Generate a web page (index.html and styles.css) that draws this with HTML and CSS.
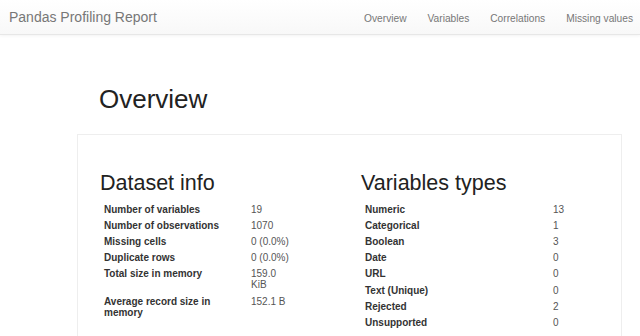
FILE: index.html
```html
<!doctype html>
<html lang="en">
<head>
	<meta charset="UTF-8">
	<title>Pandas Profiling Report</title>
	<link rel="stylesheet" href="styles.css">
</head>
<body>
	<div class="navbar">
		<a class="brand" href="#">Pandas Profiling Report</a>
		<ul class="nav">
			<li><a href="#overview">Overview</a></li>
			<li><a href="#variables">Variables</a></li>
			<li><a href="#correlations">Correlations</a></li>
			<li><a href="#missing">Missing values</a></li>
		</ul>
	</div>
	<div class="content">
		<h1 id="overview">Overview</h1>
		<div class="card">
			<div class="col">
				<h2>Dataset info</h2>
				<table class="stats left">
					<tr><th>Number of variables</th><td>19</td></tr>
					<tr><th>Number of observations</th><td>1070</td></tr>
					<tr><th>Missing cells</th><td>0 (0.0%)</td></tr>
					<tr><th>Duplicate rows</th><td>0 (0.0%)</td></tr>
					<tr><th>Total size in memory</th><td>159.0 KiB</td></tr>
					<tr><th>Average record size in memory</th><td>152.1 B</td></tr>
				</table>
			</div>
			<div class="col">
				<h2>Variables types</h2>
				<table class="stats right">
					<tr><th>Numeric</th><td>13</td></tr>
					<tr><th>Categorical</th><td>1</td></tr>
					<tr><th>Boolean</th><td>3</td></tr>
					<tr><th>Date</th><td>0</td></tr>
					<tr><th>URL</th><td>0</td></tr>
					<tr><th>Text (Unique)</th><td>0</td></tr>
					<tr><th>Rejected</th><td>2</td></tr>
					<tr><th>Unsupported</th><td>0</td></tr>
				</table>
			</div>
		</div>
	</div>
</body>
</html>
```

FILE: styles.css
```css
body {
	margin: 0;
	background: #fff;
	font-family: "Liberation Sans", Arial, sans-serif;
	color: #333;
}

.navbar {
	height: 34px;
	display: flex;
	align-items: center;
	justify-content: space-between;
	padding: 0 7px 0 9px;
	background: linear-gradient(#fff, #f8f8f8);
	border-bottom: 1px solid #e7e7e7;
	box-shadow: 0 1px 3px rgba(0,0,0,0.05);
}
.brand {
	font-size: 14px;
	color: #777;
	text-decoration: none;
}
.nav {
	display: flex;
	gap: 21px;
	margin: 0;
	padding: 0;
	list-style: none;
}
.nav a {
	font-size: 10.2px;
	color: #777;
	text-decoration: none;
}

.content {
	padding: 0 18px 0 77px;
}
h1 {
	font-size: 26px;
	font-weight: normal;
	color: #222;
	margin: 49px 0 0 22px;
	line-height: 30px;
}
.card {
	margin-top: 20px;
	border: 1px solid #eee;
	border-bottom: 0;
	display: grid;
	grid-template-columns: 261px 1fr;
	padding: 0 0 0 22px;
	height: 204px;
}
h2 {
	font-size: 21.5px;
	font-weight: normal;
	color: #222;
	margin: 35px 0 5px 0;
	line-height: 26px;
}
.stats {
	border-collapse: collapse;
	font-size: 10px;
}
.stats th, .stats td {
	text-align: left;
	vertical-align: top;
	padding: 2.6px 4px;
	line-height: 11px;
}
.stats th {
	font-weight: bold;
	color: #333;
}
.stats td {
	color: #555;
}
.left th { width: 139px; }
.left td { width: 40px; }
.right th { width: 180px; }
.right td { width: 40px; }
```
